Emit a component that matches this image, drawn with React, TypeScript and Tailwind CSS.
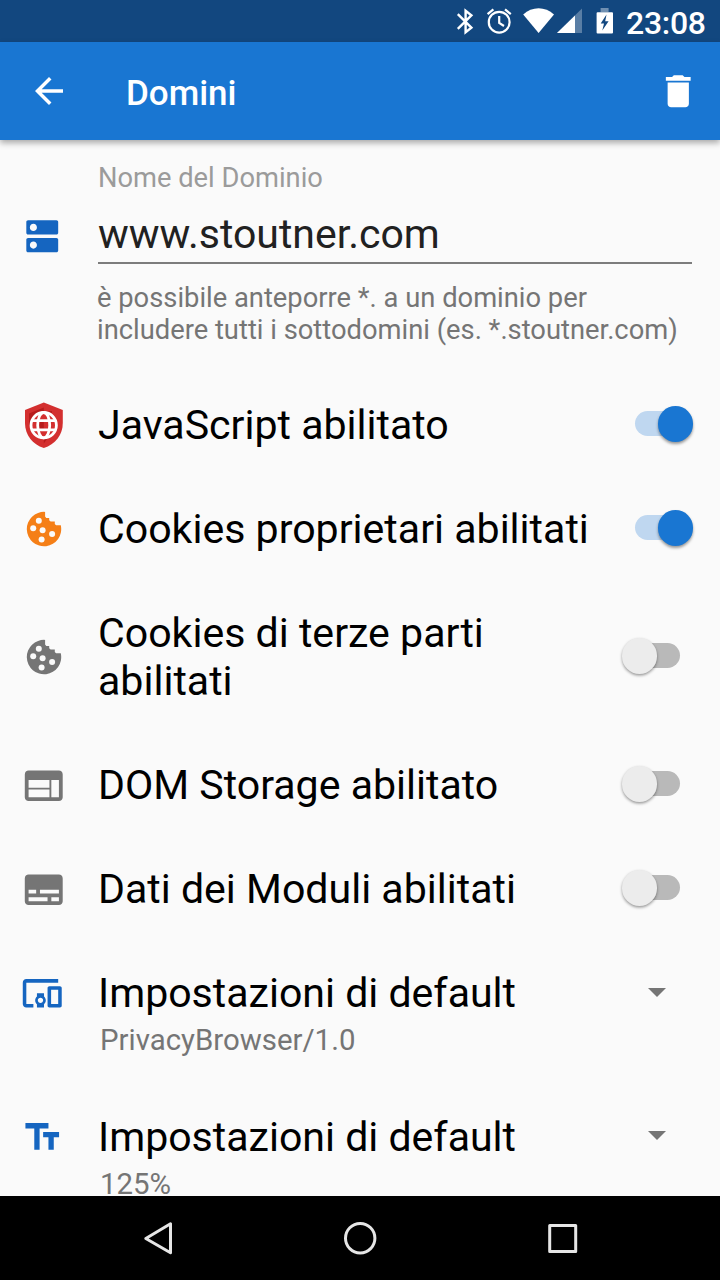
import type { ReactNode } from "react";

function StatusBar() {
  return (
    <header className="flex h-[42px] shrink-0 bg-[#12477f] text-white">
      <svg className="ml-[440px] h-[42px] w-[180px] shrink-0" viewBox="440 0 180 42" fill="currentColor">
        <path
          d="M457.8 14.2 471.4 27.6 465.6 32.2V10.8L471.4 15.4 457.8 28.8"
          fill="none"
          stroke="currentColor"
          strokeWidth="2.4"
        />
        <g fill="none" stroke="currentColor" strokeWidth="2.2">
          <circle cx="499.2" cy="22.2" r="10.4" />
          <path d="M499.2 16v7l4.8 3M487.6 14.2l5.8-4.9M510.8 14.2l-5.8-4.9" />
        </g>
        <path d="M523.2 14.4C532 6.3 545.2 6.3 554 14.4L538.6 33Z" />
        <path d="M557 33 582 8.5V33Z" opacity=".3" />
        <path d="M557 33 575 15.4V33Z" />
        <path d="M600.6 8h8v4h-8z" opacity=".4" />
        <path
          fillRule="evenodd"
          d="M597.6 12.2h14.4a1 1 0 0 1 1 1V32.5a1 1 0 0 1-1 1H597.6a1 1 0 0 1-1-1V13.2a1 1 0 0 1 1-1ZM606.5 14.5 600.7 23.5H604L602.3 30.5 608.6 21.2H605.2Z"
        />
      </svg>
      <span className="ml-[6px] mt-[4px] text-[32px] font-medium leading-[38px] tracking-[-0.3px]">23:08</span>
    </header>
  );
}

function AppBar() {
  return (
    <div className="z-10 flex h-[98px] shrink-0 items-center bg-[#1976d2] text-white shadow-[0_3px_6px_rgba(0,0,0,0.32)]">
      <svg className="ml-[28px] size-[42px] shrink-0" viewBox="0 0 24 24" fill="currentColor">
        <path d="M20 11H7.83l5.59-5.59L12 4l-8 8 8 8 1.41-1.41L7.83 13H20v-2z" />
      </svg>
      <h1 className="ml-[56px] mt-[5px] grow text-[35px] font-medium leading-[42px]">Domini</h1>
      <svg className="mr-[20.5px] size-[42.5px] shrink-0" viewBox="0 0 24 24" fill="currentColor">
        <path d="M6 19c0 1.1.9 2 2 2h8c1.1 0 2-.9 2-2V7H6v12zM19 4h-3.5l-1-1h-5l-1 1H5v2h14V4z" />
      </svg>
    </div>
  );
}

function Icon({ d, className }: { d: string; className: string }) {
  return (
    <svg className={`shrink-0 ${className}`} viewBox="0 0 24 24" fill="currentColor">
      <path fillRule="evenodd" d={d} />
    </svg>
  );
}

const blueIcon = "ml-[20.7px] size-[42.5px] text-[#1565c0]";
const grayIcon = "mt-[0.6px] ml-[21px] size-[45.5px] text-[#757575]";

const dns =
  "M20 13H4c-.55 0-1 .45-1 1v6c0 .55.45 1 1 1h16c.55 0 1-.45 1-1v-6c0-.55-.45-1-1-1zM7 19c-1.1 0-2-.9-2-2s.9-2 2-2 2 .9 2 2-.9 2-2 2zM20 3H4c-.55 0-1 .45-1 1v6c0 .55.45 1 1 1h16c.55 0 1-.45 1-1V4c0-.55-.45-1-1-1zM7 9c-1.1 0-2-.9-2-2s.9-2 2-2 2 .9 2 2-.9 2-2 2z";
const web =
  "M20 4H4c-1.1 0-1.99.9-1.99 2L2 18c0 1.1.9 2 2 2h16c1.1 0 2-.9 2-2V6c0-1.1-.9-2-2-2zm-5 14H4v-4h11v4zm0-5H4V9h11v4zm5 5h-4V9h4v9z";
const subtitles =
  "M20 4H4c-1.1 0-2 .9-2 2v12c0 1.1.9 2 2 2h16c1.1 0 2-.9 2-2V6c0-1.1-.9-2-2-2zM4 12h4v2H4v-2zm10 6H4v-2h10v2zm6 0h-4v-2h4v2zm0-4H10v-2h10v2z";
const devices =
  "M3 6h18V4H3c-1.1 0-2 .9-2 2v12c0 1.1.9 2 2 2h4v-2H3V6zm10 6H9v1.78c-.61.55-1 1.33-1 2.22s.39 1.67 1 2.22V20h4v-1.78c.61-.55 1-1.34 1-2.22s-.39-1.67-1-2.22V12zm-2 5.5c-.83 0-1.5-.67-1.5-1.5s.67-1.5 1.5-1.5 1.5.67 1.5 1.5-.67 1.5-1.5 1.5zM22 8h-6c-.5 0-1 .5-1 1v10c0 .5.5 1 1 1h6c.5 0 1-.5 1-1V9c0-.5-.5-1-1-1zm-1 10h-4v-8h4v8z";
const textFields = "M2.5 4v3h5v12h3V7h5V4h-13zm19 5h-9v3h3v7h3v-7h3V9z";

function Shield() {
  return (
    <svg className="-my-[2px] ml-[20px] h-[52px] w-[48px] shrink-0" viewBox="20 399 48 52">
      <path d="M43.8 402.5 62.8 410V423C62.8 435 55 444.5 43.8 448 32.6 444.5 25 435 25 423V410Z" fill="#d32f2f" />
      <path d="M43.8 407.5V411H52V432L43.8 443.5V439L29 425V413.5Z" fill="#b71c1c" />
      <circle cx="43.7" cy="425.2" r="13" fill="#d32f2f" />
      <path d="M38 419.5h5.8v10.8H38z" fill="#b71c1c" />
      <g fill="none" stroke="#fff" strokeWidth="2.8">
        <circle cx="43.7" cy="425.2" r="12.7" />
        <ellipse cx="43.7" cy="425.2" rx="6" ry="12.7" />
        <path d="M32 420.6h23.4M32 429.9h23.4" />
      </g>
    </svg>
  );
}

function Cookie({ className }: { className: string }) {
  return (
    <svg className={`ml-[24px] size-[40px] shrink-0 ${className}`} viewBox="24.2 509 40 40">
      <path
        fill="currentColor"
        d="M45.3 511.9A17.2 17.2 0 1 0 61 525.3H56.2L55 524V521.6H50.8L49.4 520.3V518H46.5L45.3 516.6Z"
      />
      <g fill="#fafafa">
        <circle cx="39" cy="520.8" r="3" />
        <circle cx="33.4" cy="528.2" r="3" />
        <circle cx="42.8" cy="530.2" r="3" />
        <circle cx="52.3" cy="534" r="3" />
        <circle cx="41.8" cy="539.6" r="3" />
      </g>
    </svg>
  );
}

function Switch({ on }: { on: boolean }) {
  return (
    <span
      role="switch"
      aria-checked={on}
      className={`relative mr-[40px] -mt-[3px] h-[24.5px] w-[45px] shrink-0 rounded-full ${on ? "bg-[#bfd7f0]" : "bg-[#b9b9b9]"}`}
    >
      <span
        className={`absolute -top-[5px] size-[35.5px] rounded-full ${
          on
            ? "left-[22.5px] bg-[#1976d2] shadow-[0_2px_3px_rgba(0,0,0,0.4)]"
            : "-left-[13.5px] bg-[#ececec] shadow-[0_1.5px_3px_rgba(0,0,0,0.4)]"
        }`}
      />
    </span>
  );
}

function SwitchRow({ icon, label, on = false }: { icon: ReactNode; label: string; on?: boolean }) {
  return (
    <div className="flex items-center py-[28px]">
      <div className="w-[98px] shrink-0">{icon}</div>
      <div className="w-[524px] shrink-0 text-[41.08px] leading-[48px] text-black">{label}</div>
      <div className="flex grow justify-end">
        <Switch on={on} />
      </div>
    </div>
  );
}

function SpinnerRow({ icon, label, detail }: { icon: ReactNode; label: string; detail: string }) {
  return (
    <div className="h-[143.5px] shrink-0 pt-[28px]">
      <div className="flex h-[48px] items-center">
        <div className="w-[98px] shrink-0 pt-[1.2px]">{icon}</div>
        <div className="grow text-[41.05px] leading-[48px] text-black">{label}</div>
        <svg className="-mt-[2px] mr-[54px] h-[9px] w-[18px]" viewBox="0 0 18 9" fill="#757575">
          <path d="M0 0h18L9 9z" />
        </svg>
      </div>
      <div className="ml-[100px] mt-[6px] text-[29.4px] leading-[34px] text-[#757575]">{detail}</div>
    </div>
  );
}

function DomainName() {
  return (
    <div className="flex h-[233px] shrink-0">
      <div className="w-[98px] shrink-0 pt-[75px]">
        <Icon d={dns} className={blueIcon} />
      </div>
      <div className="w-[594px] shrink-0 pt-[22px]">
        <div className="text-[27.3px] leading-[32px] text-[#9b9b9b]">Nome del Dominio</div>
        <div className="mt-[16px] h-[54px] border-b-2 border-[#7c7c7c] text-[41px] leading-[48px] text-[#212121]">
          www.stoutner.com
        </div>
        <p className="-ml-px mt-[18px] whitespace-nowrap text-[27.33px] leading-[32px] text-[#757575]">
          è possibile anteporre *. a un dominio per
          <br />
          includere tutti i sottodomini (es. *.stoutner.com)
        </p>
      </div>
    </div>
  );
}

function NavBar() {
  return (
    <nav className="flex h-[84px] shrink-0 bg-black">
      <svg className="h-[84px] w-[720px]" viewBox="0 1196 720 84" fill="none" stroke="#e6e6e6" strokeWidth="3" strokeLinejoin="round">
        <path d="M170.5 1223.8V1252.8L145.8 1238.5Z" />
        <circle cx="360.2" cy="1238.2" r="14.7" />
        <rect x="549.7" y="1225.5" width="26" height="26" />
      </svg>
    </nav>
  );
}

export default function App() {
  return (
    <div className="flex h-[1280px] w-[720px] flex-col overflow-hidden bg-[#fafafa] font-['Roboto',sans-serif]">
      <StatusBar />
      <AppBar />
      <main className="h-[1056px] shrink-0 overflow-hidden">
        <DomainName />
        <SwitchRow icon={<Shield />} label="JavaScript abilitato" on />
        <SwitchRow icon={<Cookie className="text-[#f57f17]" />} label="Cookies proprietari abilitati" on />
        <SwitchRow icon={<Cookie className="text-[#757575]" />} label="Cookies di terze parti abilitati" />
        <SwitchRow icon={<Icon d={web} className={grayIcon} />} label="DOM Storage abilitato" />
        <SwitchRow icon={<Icon d={subtitles} className={grayIcon} />} label="Dati dei Moduli abilitati" />
        <SpinnerRow icon={<Icon d={devices} className={blueIcon} />} label="Impostazioni di default" detail="PrivacyBrowser/1.0" />
        <SpinnerRow icon={<Icon d={textFields} className={blueIcon} />} label="Impostazioni di default" detail="125%" />
      </main>
      <NavBar />
    </div>
  );
}
